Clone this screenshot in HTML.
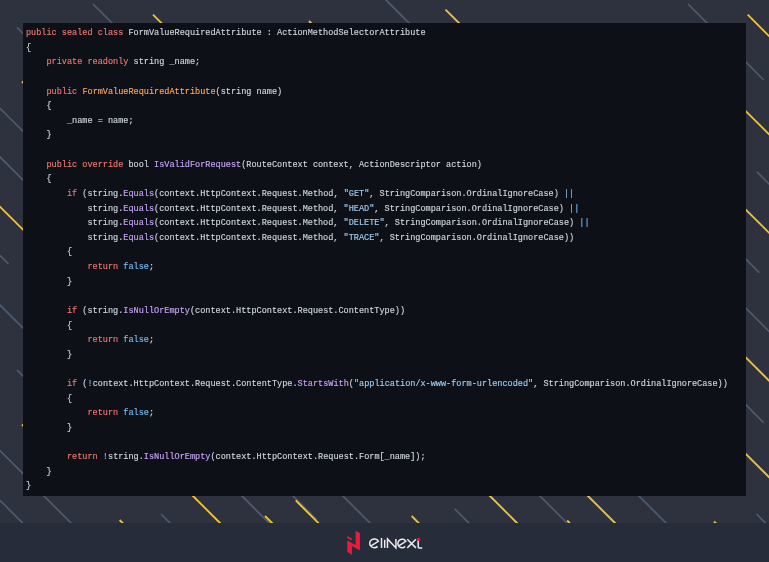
<!DOCTYPE html>
<html><head><meta charset="utf-8">
<style>
html,body{margin:0;padding:0;}
body{width:769px;height:562px;overflow:hidden;position:relative;background:#2d323e;}
svg.bgl{position:absolute;left:0;top:0;}
.band{position:absolute;left:0;top:522.5px;width:769px;height:39.5px;background:#272c3a;}
.panel{position:absolute;left:23px;top:23px;width:723px;height:473px;background:#0d1117;overflow:hidden;}
pre{position:absolute;margin:0;left:3px;top:3px;font-family:"Liberation Mono",monospace;font-size:9.234px;line-height:14.62px;color:#d0d7de;-webkit-text-stroke:0.15px;transform-origin:0 0;transform:scale(0.92593,1) translateZ(0);}
pre i{font-style:normal;}
.k{color:#f47770;} .t{color:#ffa657;} .f{color:#c9a3f8;} .s{color:#a0cdf5;} .l{color:#79bdf5;}
.logo{position:absolute;left:0;top:0;}
</style></head><body>
<svg class="bgl" width="769" height="562" viewBox="0 0 769 562">
<line x1="93" y1="4" x2="125" y2="36" stroke="#505d70" stroke-width="1.6"/>
<line x1="380" y1="-6" x2="420" y2="34" stroke="#505d70" stroke-width="1.6"/>
<line x1="688" y1="4" x2="720" y2="36" stroke="#505d70" stroke-width="1.6"/>
<line x1="17" y1="27.5" x2="30" y2="40.5" stroke="#505d70" stroke-width="1.6"/>
<line x1="-10" y1="98.3" x2="30" y2="138.3" stroke="#505d70" stroke-width="1.6"/>
<line x1="-10" y1="147" x2="30" y2="187" stroke="#505d70" stroke-width="1.6"/>
<line x1="-5" y1="250.5" x2="8.5" y2="264" stroke="#505d70" stroke-width="1.6"/>
<line x1="-10" y1="295" x2="30" y2="335" stroke="#505d70" stroke-width="1.6"/>
<line x1="17" y1="370" x2="30" y2="383" stroke="#505d70" stroke-width="1.6"/>
<line x1="-10" y1="440.6" x2="30" y2="480.6" stroke="#505d70" stroke-width="1.6"/>
<line x1="-10" y1="490.4" x2="24" y2="524.4" stroke="#505d70" stroke-width="1.6"/>
<line x1="30" y1="482" x2="72" y2="524" stroke="#505d70" stroke-width="1.6"/>
<line x1="161" y1="514" x2="171" y2="524" stroke="#505d70" stroke-width="1.6"/>
<line x1="230" y1="484" x2="270" y2="524" stroke="#505d70" stroke-width="1.6"/>
<line x1="280" y1="483" x2="316.5" y2="519.5" stroke="#505d70" stroke-width="1.6"/>
<line x1="330" y1="483" x2="372" y2="525" stroke="#505d70" stroke-width="1.6"/>
<line x1="454.6" y1="508.7" x2="470" y2="524.1" stroke="#505d70" stroke-width="1.6"/>
<line x1="530" y1="486" x2="568" y2="524" stroke="#505d70" stroke-width="1.6"/>
<line x1="630" y1="487" x2="668" y2="525" stroke="#505d70" stroke-width="1.6"/>
<line x1="756.5" y1="514" x2="768" y2="525.5" stroke="#505d70" stroke-width="1.6"/>
<line x1="740" y1="56" x2="763.7" y2="80" stroke="#505d70" stroke-width="1.6"/>
<line x1="756.8" y1="171.7" x2="780" y2="195" stroke="#505d70" stroke-width="1.6"/>
<line x1="740" y1="253.3" x2="759.4" y2="272.8" stroke="#505d70" stroke-width="1.6"/>
<line x1="740" y1="302.3" x2="780" y2="342.3" stroke="#505d70" stroke-width="1.6"/>
<line x1="740" y1="398.9" x2="763.6" y2="422.8" stroke="#505d70" stroke-width="1.6"/>
<line x1="153" y1="14.6" x2="175" y2="36.6" stroke="#f2c23c" stroke-width="1.85"/>
<line x1="309" y1="21" x2="320" y2="32" stroke="#f2c23c" stroke-width="1.85"/>
<line x1="445.5" y1="9.6" x2="470" y2="34" stroke="#f2c23c" stroke-width="1.85"/>
<line x1="747.7" y1="14.7" x2="790" y2="57" stroke="#f2c23c" stroke-width="1.85"/>
<line x1="22" y1="81.5" x2="30" y2="89.5" stroke="#f2c23c" stroke-width="1.85"/>
<line x1="-10" y1="196.7" x2="30" y2="236.7" stroke="#f2c23c" stroke-width="1.85"/>
<line x1="22" y1="424.5" x2="30" y2="432.5" stroke="#f2c23c" stroke-width="1.85"/>
<line x1="119.6" y1="520" x2="124" y2="524.4" stroke="#f2c23c" stroke-width="1.85"/>
<line x1="180" y1="483" x2="221" y2="524" stroke="#f2c23c" stroke-width="1.85"/>
<line x1="265" y1="516" x2="273" y2="524" stroke="#f2c23c" stroke-width="1.85"/>
<line x1="295.7" y1="500.4" x2="320" y2="524.7" stroke="#f2c23c" stroke-width="1.85"/>
<line x1="411.7" y1="516" x2="420" y2="524.3" stroke="#f2c23c" stroke-width="1.85"/>
<line x1="477" y1="483" x2="519" y2="525" stroke="#f2c23c" stroke-width="1.85"/>
<line x1="567.2" y1="520.5" x2="570" y2="523.3" stroke="#f2c23c" stroke-width="1.85"/>
<line x1="576" y1="484" x2="617" y2="525" stroke="#f2c23c" stroke-width="1.85"/>
<line x1="714" y1="521.5" x2="717" y2="524.5" stroke="#f2c23c" stroke-width="1.85"/>
<line x1="740" y1="105.3" x2="790" y2="155.3" stroke="#f2c23c" stroke-width="1.85"/>
<line x1="740" y1="203.8" x2="790" y2="253.8" stroke="#f2c23c" stroke-width="1.85"/>
<line x1="740" y1="351.6" x2="790" y2="401.6" stroke="#f2c23c" stroke-width="1.85"/>
<line x1="740" y1="448.1" x2="790" y2="498.1" stroke="#f2c23c" stroke-width="1.85"/>
</svg>
<div class="band"></div>
<div class="panel"><pre><i class="k">public sealed class</i> FormValueRequiredAttribute : ActionMethodSelectorAttribute
{
    <i class="k">private readonly</i> string _name;

    <i class="k">public</i> <i class="t">FormValueRequiredAttribute</i>(string name)
    {
        _name <i class="l">=</i> name;
    }

    <i class="k">public override</i> bool <i class="f">IsValidForRequest</i>(RouteContext context, ActionDescriptor action)
    {
        <i class="k">if</i> (string.<i class="f">Equals</i>(context.HttpContext.Request.Method, <i class="s">&quot;GET&quot;</i>, StringComparison.OrdinalIgnoreCase) <i class="l">||</i>
            string.<i class="f">Equals</i>(context.HttpContext.Request.Method, <i class="s">&quot;HEAD&quot;</i>, StringComparison.OrdinalIgnoreCase) <i class="l">||</i>
            string.<i class="f">Equals</i>(context.HttpContext.Request.Method, <i class="s">&quot;DELETE&quot;</i>, StringComparison.OrdinalIgnoreCase) <i class="l">||</i>
            string.<i class="f">Equals</i>(context.HttpContext.Request.Method, <i class="s">&quot;TRACE&quot;</i>, StringComparison.OrdinalIgnoreCase))
        {
            <i class="k">return</i> <i class="l">false</i>;
        }

        <i class="k">if</i> (string.<i class="f">IsNullOrEmpty</i>(context.HttpContext.Request.ContentType))
        {
            <i class="k">return</i> <i class="l">false</i>;
        }

        <i class="k">if</i> (<i class="l">!</i>context.HttpContext.Request.ContentType.<i class="f">StartsWith</i>(<i class="s">&quot;application/x-www-form-urlencoded&quot;</i>, StringComparison.OrdinalIgnoreCase))
        {
            <i class="k">return</i> <i class="l">false</i>;
        }

        <i class="k">return</i> <i class="l">!</i>string.<i class="f">IsNullOrEmpty</i>(context.HttpContext.Request.Form[_name]);
    }
}</pre></div>
<svg class="logo" width="769" height="562" viewBox="0 0 769 562">
<polygon points="347.3,540.5 355.6,544.9 355.6,530.9 359.9,533.1 359.9,550.4 351.9,546.1 351.9,554.9 347.3,551.7" fill="#eb1a3f"/>
<polygon points="347.3,536 351.9,538.4 351.9,540.6 347.3,538.2" fill="#eb1a3f"/>
<g fill="none" stroke="#ececf0" stroke-width="1.5" stroke-linecap="butt">
<path d="M371.4,545.7 L378.4,541.3 A4.6,4.4 0 1 0 377.6,546.4"/>
<path d="M381.5,537.9 V547.9"/>
<path d="M384.7,539.8 V547.9"/>
<path d="M387.5,547.9 V539 L395.9,547.9 V539"/>
<path d="M398.8,545.8 L405.8,541.3 A4.3,4.3 0 1 0 405.2,546.5"/>
<path d="M407.3,539.2 L415.9,547.9 M415.9,539.2 L407.3,547.9"/>
<path d="M418.2,540.3 V546.7 Q418.2,547.9 419.4,547.9 L422.2,547.9"/>
</g>
<polygon points="416.9,538.3 418.9,537.8 421,540.3 417.8,540.9" fill="#eb1a3f"/>
</svg>
</body></html>
